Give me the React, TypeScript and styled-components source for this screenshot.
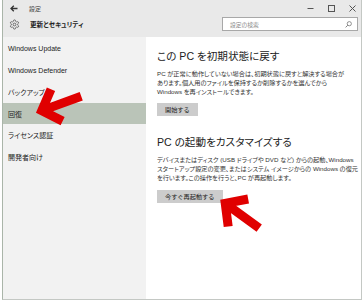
import React from "react";
import styled, { createGlobalStyle } from "styled-components";

const Global = createGlobalStyle`
  html, body { margin: 0; padding: 0; background: #ffffff; }
  body { font-family: "Liberation Sans", "Noto Sans CJK JP", sans-serif; }
`;

const Page = styled.div`
  position: relative;
  width: 364px;
  height: 302px;
`;

const Window = styled.div`
  margin-left: 2px;
  width: 360px;
  height: 300px;
  box-sizing: border-box;
  border: 1px solid #c4c8c4;
  border-top: none;
  border-left-color: #aab5a9;
  display: flex;
  flex-direction: column;
  overflow: hidden;
  font-family: "Liberation Sans", "Noto Sans CJK JP", sans-serif;
  font-feature-settings: "palt";
  color: #222;
`;

const Header = styled.div`
  background: #e9e9e9;
  height: 37px;
  display: flex;
  flex-direction: column;
`;

const TitleRow = styled.div`
  height: 17px;
  display: flex;
  align-items: center;
  padding-left: 7px;
`;

const Back = styled.span`
  display: flex;
  width: 19px;
  color: #333;
`;

const TitleText = styled.span`
  font-size: 6px;
  color: #444;
  flex: 1;
`;

const Controls = styled.div`
  display: flex;
  align-items: center;
  gap: 14px;
  padding-right: 5px;
`;

const Ctl = styled.span`
  display: flex;
  width: 7px;
  height: 7px;
  color: #555;
`;

const SubRow = styled.div`
  height: 14px;
  display: flex;
  align-items: center;
  padding-left: 6px;
`;

const Gear = styled.span`
  display: flex;
  width: 21px;
  color: #444;
`;

const Section = styled.span`
  font-size: 6.6px;
  font-weight: bold;
  color: #222;
  flex: 1;
`;

const Search = styled.div`
  width: 136px;
  height: 14px;
  box-sizing: border-box;
  border: 1px solid #a8a8a8;
  background: #fff;
  margin-right: 3px;
  display: flex;
  align-items: center;
  padding: 0 5px 0 7px;
  font-size: 5.8px;
  color: #8a8a8a;
`;

const SearchText = styled.span`
  flex: 1;
`;

const Body = styled.div`
  flex: 1;
  display: flex;
  min-height: 0;
`;

const Sidebar = styled.nav`
  width: 143px;
  background: #f2f2f2;
  padding-top: 1px;
  display: flex;
  flex-direction: column;
`;

const Item = styled.div<{ $active?: boolean }>`
  height: 21.6px;
  display: flex;
  align-items: center;
  padding-left: 5px;
  font-size: 7px;
  color: #222;
  background: ${(p) => (p.$active ? "#bac4b8" : "transparent")};
`;

const Content = styled.main`
  flex: 1;
  background: #fff;
  padding: 12px 0 0 11px;
  display: flex;
  flex-direction: column;
  min-width: 0;
`;

const Heading = styled.h2<{ $top?: number }>`
  margin: 0;
  font-weight: normal;
  font-size: 10.6px;
  line-height: 14px;
  color: #222;
  margin-top: ${(p) => p.$top ?? 0}px;
`;

const Para = styled.p`
  margin: 7px 0 0 0;
  font-size: 6.2px;
  line-height: 8.8px;
  color: #333;
  white-space: nowrap;
`;

const Button = styled.button`
  margin-top: 7px;
  align-self: flex-start;
  border: none;
  background: #cccccc;
  font-family: inherit;
  font-size: 6.2px;
  color: #222;
  padding: 0 8px;
  height: 13px;
  display: flex;
  align-items: center;
`;

const Overlay = styled.svg`
  position: absolute;
  left: 0;
  top: 0;
  pointer-events: none;
`;

function Arrow({ x, y, angle }: { x: number; y: number; angle: number }) {
  return (
    <g transform={`translate(${x} ${y}) rotate(${angle})`}>
      <path
        d="M20,-17 L4,0 L20,17 M4,0 L46,0"
        fill="none"
        stroke="#e00000"
        strokeWidth={9}
        strokeLinejoin="miter"
        strokeMiterlimit={4}
      />
    </g>
  );
}

export default function App() {
  return (
    <Page>
      <Global />
      <Window>
        <Header>
          <TitleRow>
            <Back>
              <svg width="8" height="7" viewBox="0 0 8 7">
                <path d="M7.5,3.5 H1 M3.8,0.7 L1,3.5 L3.8,6.3" fill="none" stroke="currentColor" strokeWidth="1.3" />
              </svg>
            </Back>
            <TitleText>設定</TitleText>
            <Controls>
              <Ctl>
                <svg width="7" height="7" viewBox="0 0 7 7">
                  <path d="M0.5,3.5 H6.5" stroke="currentColor" strokeWidth="1" />
                </svg>
              </Ctl>
              <Ctl>
                <svg width="7" height="7" viewBox="0 0 7 7">
                  <rect x="0.5" y="0.5" width="6" height="6" fill="none" stroke="currentColor" strokeWidth="1" />
                </svg>
              </Ctl>
              <Ctl>
                <svg width="7" height="7" viewBox="0 0 7 7">
                  <path d="M0.5,0.5 L6.5,6.5 M6.5,0.5 L0.5,6.5" stroke="currentColor" strokeWidth="1" />
                </svg>
              </Ctl>
            </Controls>
          </TitleRow>
          <SubRow>
            <Gear>
              <svg width="11" height="11" viewBox="0 0 24 24" fill="none" stroke="currentColor" strokeWidth="1.6">
                <path d="M12.22 2h-.44a2 2 0 0 0-2 2v.18a2 2 0 0 1-1 1.73l-.43.25a2 2 0 0 1-2 0l-.15-.08a2 2 0 0 0-2.73.73l-.22.38a2 2 0 0 0 .73 2.73l.15.1a2 2 0 0 1 1 1.72v.51a2 2 0 0 1-1 1.74l-.15.09a2 2 0 0 0-.73 2.73l.22.38a2 2 0 0 0 2.73.73l.15-.08a2 2 0 0 1 2 0l.43.25a2 2 0 0 1 1 1.73V20a2 2 0 0 0 2 2h.44a2 2 0 0 0 2-2v-.18a2 2 0 0 1 1-1.73l.43-.25a2 2 0 0 1 2 0l.15.08a2 2 0 0 0 2.73-.73l.22-.39a2 2 0 0 0-.73-2.73l-.15-.08a2 2 0 0 1-1-1.74v-.5a2 2 0 0 1 1-1.74l.15-.09a2 2 0 0 0 .73-2.73l-.22-.38a2 2 0 0 0-2.73-.73l-.15.08a2 2 0 0 1-2 0l-.43-.25a2 2 0 0 1-1-1.73V4a2 2 0 0 0-2-2z" />
                <circle cx="12" cy="12" r="3" />
              </svg>
            </Gear>
            <Section>更新とセキュリティ</Section>
            <Search>
              <SearchText>設定の検索</SearchText>
              <svg width="7" height="7" viewBox="0 0 7 7">
                <circle cx="4.3" cy="2.7" r="2.1" fill="none" stroke="#777" strokeWidth="0.8" />
                <path d="M2.8,4.2 L0.6,6.4" stroke="#777" strokeWidth="0.9" />
              </svg>
            </Search>
          </SubRow>
        </Header>
        <Body>
          <Sidebar>
            <Item>Windows Update</Item>
            <Item>Windows Defender</Item>
            <Item>バックアップ</Item>
            <Item $active>回復</Item>
            <Item>ライセンス認証</Item>
            <Item>開発者向け</Item>
          </Sidebar>
          <Content>
            <Heading>この PC を初期状態に戻す</Heading>
            <Para>
              PC が正常に動作していない場合は、初期状態に戻すと解決する場合が
              <br />
              あります。個人用のファイルを保持するか削除するかを選んでから
              <br />
              Windows を再インストールできます。
            </Para>
            <Button>開始する</Button>
            <Heading $top={19}>PC の起動をカスタマイズする</Heading>
            <Para>
              デバイスまたはディスク (USB ドライブや DVD など) からの起動、Windows
              <br />
              スタートアップ設定の変更、またはシステム イメージからの Windows の復元
              <br />
              を行います。この操作を行うと、PC が再起動します。
            </Para>
            <Button>今すぐ再起動する</Button>
          </Content>
        </Body>
      </Window>
      <Overlay width="364" height="302" viewBox="0 0 364 302">
        <Arrow x={38} y={112} angle={-20} />
        <Arrow x={222} y={201} angle={36} />
      </Overlay>
    </Page>
  );
}
